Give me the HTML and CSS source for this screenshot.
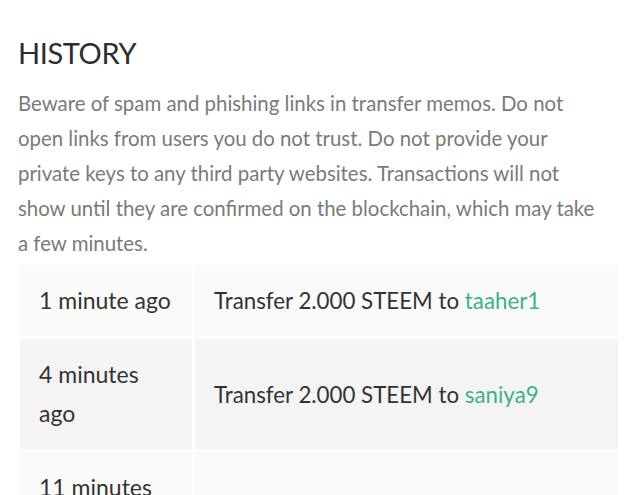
FILE: index.html
```html
<!DOCTYPE html>
<html lang="en">
<head>
    <meta charset="UTF-8">
    <meta name="viewport" content="width=device-width, initial-scale=1.0">
    <title>History</title>
    <link rel="stylesheet" href="styles.css">
</head>
<body>
    <h1 class="title">HISTORY</h1>
    <p class="notice">Beware of spam and phishing links in transfer memos. Do not<br>
        open links from users you do not trust. Do not provide your<br>
        private keys to any third party websites. Transactions will not<br>
        show until they are confirmed on the blockchain, which may take<br>
        a few minutes.</p>

    <table class="history">
        <tr>
            <td class="when">1 minute ago</td>
            <td class="what">Transfer 2.000 STEEM to <a href="#">taaher1</a></td>
        </tr>
        <tr>
            <td class="when">4 minutes ago</td>
            <td class="what">Transfer 2.000 STEEM to <a href="#">saniya9</a></td>
        </tr>
        <tr>
            <td class="when">11 minutes ago</td>
            <td class="what">Transfer 2.000 STEEM to <a href="#">rahul12</a></td>
        </tr>
    </table>
</body>
</html>
```

FILE: styles.css
```css
body {
    margin: 0;
    padding: 0 19px 0 17px;
    font-family: Lato, "Open Sans", sans-serif;
    background-color: white;
    color: #333;
}
.title {
    margin: 34px 0 0 1px;
    font-size: 29px;
    font-weight: normal;
    line-height: 38px;
    letter-spacing: -0.4px;
    color: #2d2d2d;
}
.notice {
    margin: 14px 0 1px 1px;
    font-size: 20.4px;
    line-height: 35px;
    color: #7a7a7a;
}
.history {
    width: 100%;
    border-spacing: 3px;
}
.history td {
    padding: 16px 19px;
    font-size: 23px;
    line-height: 39px;
    color: #333;
}
.history tr:nth-child(odd) td {
    background-color: #fafafa;
}
.history tr:nth-child(even) td {
    background-color: #f4f4f4;
}
.history .when {
    width: 134px;
}
.history .what {
    font-size: 22.3px;
}
.what a {
    color: #3cb08c;
    text-decoration: none;
}
```
